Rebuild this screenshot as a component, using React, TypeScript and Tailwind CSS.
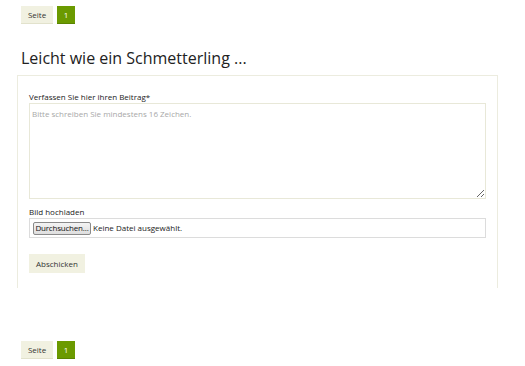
function Pagination({ className = '' }: { className?: string }) {
  return (
    <div className={`flex items-center gap-[4px] pl-[21px] ${className}`}>
      <span className="h-[18px] w-[32px] flex items-center justify-center bg-[#f1f1e1] border-b border-[#e2e2cc] text-[8px] text-[#333]">
        Seite
      </span>
      <span className="h-[18px] w-[18px] flex items-center justify-center bg-[#6b9a00] border-b border-[#5a8400] text-[8px] text-white">
        1
      </span>
    </div>
  );
}

export default function App() {
  return (
    <div
      className="w-[525px] h-[366px] bg-white text-[#222] overflow-hidden"
      style={{ fontFamily: '"Open Sans", "Liberation Sans", sans-serif' }}
    >
      <Pagination className="pt-[6px]" />

      <h2 className="mt-[23px] ml-[21px] text-[16px] leading-[22px] text-[#222]">
        Leicht wie ein Schmetterling ...
      </h2>

      {/* Form card */}
      <div className="mt-[6px] ml-[17px] w-[481px] border-t border-x border-[#ececdf] px-[11px] pt-[16px] pb-[15px]">
        <label className="block text-[8px] leading-[10px] text-[#222]">
          Verfassen Sie hier ihren Beitrag*
        </label>
        <textarea
          placeholder="Bitte schreiben Sie mindestens 16 Zeichen."
          className="block mt-[1px] w-[457px] h-[96px] border border-[#e8e8d8] px-[2px] py-[4px] text-[8px] leading-[11px] placeholder:text-[#a8a8a8] outline-none"
        />

        <label className="block mt-[8px] text-[8px] leading-[10px] text-[#222]">
          Bild hochladen
        </label>
        <div className="mt-[1px] w-[457px] h-[20px] border border-[#dcdcdc] flex items-center pl-[3px] gap-[2px] text-[8px]">
          <span className="h-[13px] w-[58px] flex items-center justify-center tracking-[-0.2px] border border-[#8a8a8a] rounded-[2px] bg-gradient-to-b from-[#f4f4f4] to-[#dedede] text-[#111]">
            Durchsuchen...
          </span>
          <span className="text-[#222]">Keine Datei ausgewählt.</span>
        </div>

        <button className="mt-[16px] h-[19px] w-[56px] flex items-center justify-center bg-[#f1f1e1] text-[8px] text-[#333]">
          Abschicken
        </button>
      </div>

      <Pagination className="mt-[53px]" />
    </div>
  );
}
